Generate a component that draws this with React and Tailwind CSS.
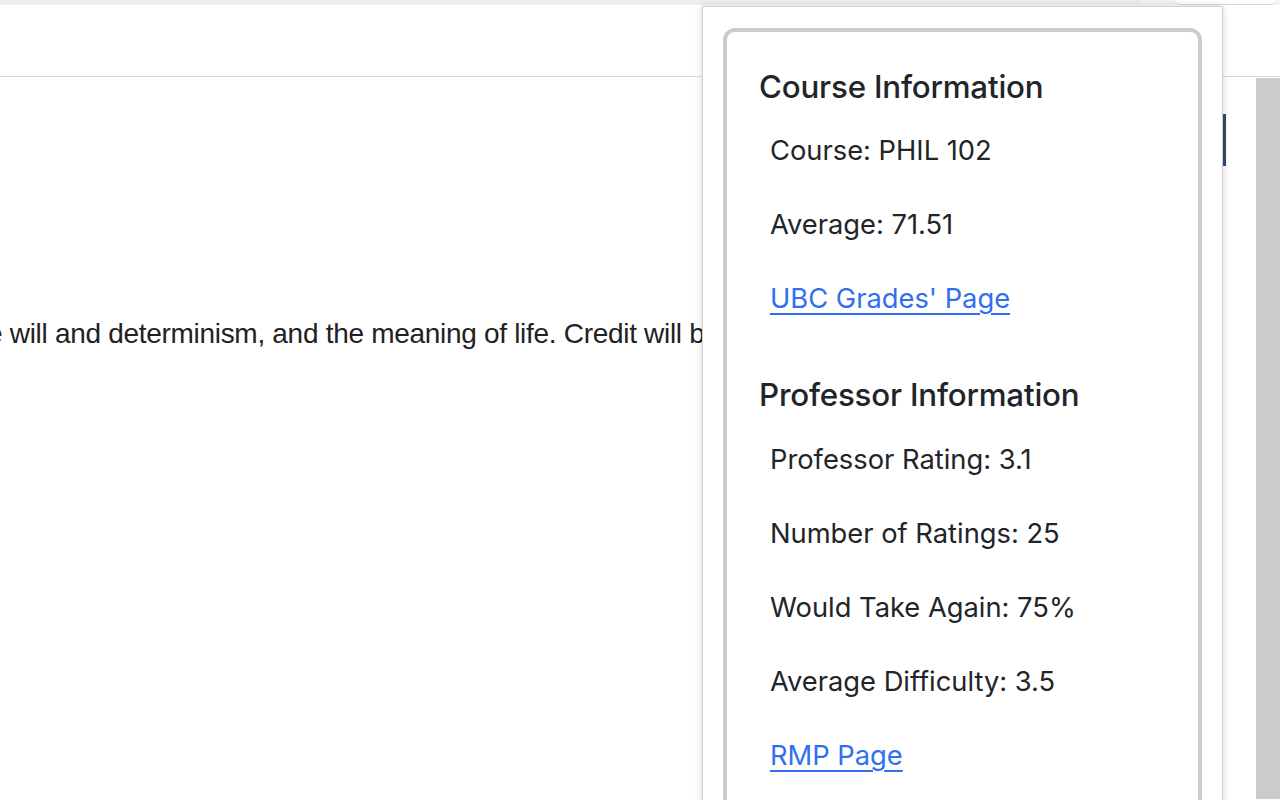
export default function App() {
  const sans = { fontFamily: 'Inter, "Noto Sans", sans-serif' };
  return (
    <div className="relative w-[1280px] h-[800px] overflow-hidden bg-white">
      {/* top browser strip */}
      <div className="h-[5px] bg-[#f1f3f4] flex">
        <div className="w-[1140px] h-[5px] bg-[#eceef1] rounded-br-[6px]" />
        <div className="ml-[35px] w-[100px] h-[5px] border-b border-[#d6d6d6] rounded-b-[8px] bg-white" />
      </div>
      {/* page header */}
      <div className="h-[72px] border-b border-[#d7d7d7] bg-white" />
      <div className="flex h-[722px]">
        <div className="flex-1 overflow-hidden relative">
          <div
            className="mt-[243px] ml-[-13px] whitespace-nowrap text-[28px] leading-[28px] text-[#222] tracking-[-0.3px]"
            style={{ fontFamily: '"Liberation Sans", Arial, sans-serif' }}
          >
            e will and determinism, and the meaning of life. Credit will be
          </div>
          <div className="absolute left-[1222px] top-[37px] w-[4px] h-[52px] bg-[#2d4d6b]" />
        </div>
        <div className="w-[24px] bg-[#cbcbcb] mt-[1px]" />
      </div>

      {/* extension popup */}
      <div
        className="absolute left-[702px] top-[6px] w-[521px] h-[820px] bg-white border border-[#cfcfcf] shadow-[0_0_8px_rgba(0,0,0,0.15)] px-[20px] pt-[21px]"
        style={sans}
      >
        <div className="border-[4px] border-[#cbcbcb] rounded-[12px] h-[900px] pl-[32px] pt-[35px] text-[#212529]">
          <h3 className="text-[31.3px] leading-[40px] font-medium mb-[7px] tracking-[-0.2px]">Course Information</h3>
          <div className="pl-[11px] text-[27.3px]">
            <div className="leading-[74px]">Course: PHIL 102</div>
            <div className="leading-[74px]">Average: 71.51</div>
            <div className="leading-[74px]">
              <a href="#" className="text-[#306ff0] underline underline-offset-[5px] decoration-[2px]">UBC Grades' Page</a>
            </div>
          </div>
          <h3 className="text-[31.3px] leading-[40px] font-medium mt-[39px] mb-[8px] tracking-[-0.2px]">Professor Information</h3>
          <div className="pl-[11px] text-[27.3px]">
            <div className="leading-[74px]">Professor Rating: 3.1</div>
            <div className="leading-[74px]">Number of Ratings: 25</div>
            <div className="leading-[74px]">Would Take Again: 75%</div>
            <div className="leading-[74px]">Average Difficulty: 3.5</div>
            <div className="leading-[74px]">
              <a href="#" className="text-[#306ff0] underline underline-offset-[5px] decoration-[2px]">RMP Page</a>
            </div>
          </div>
        </div>
      </div>
    </div>
  );
}
